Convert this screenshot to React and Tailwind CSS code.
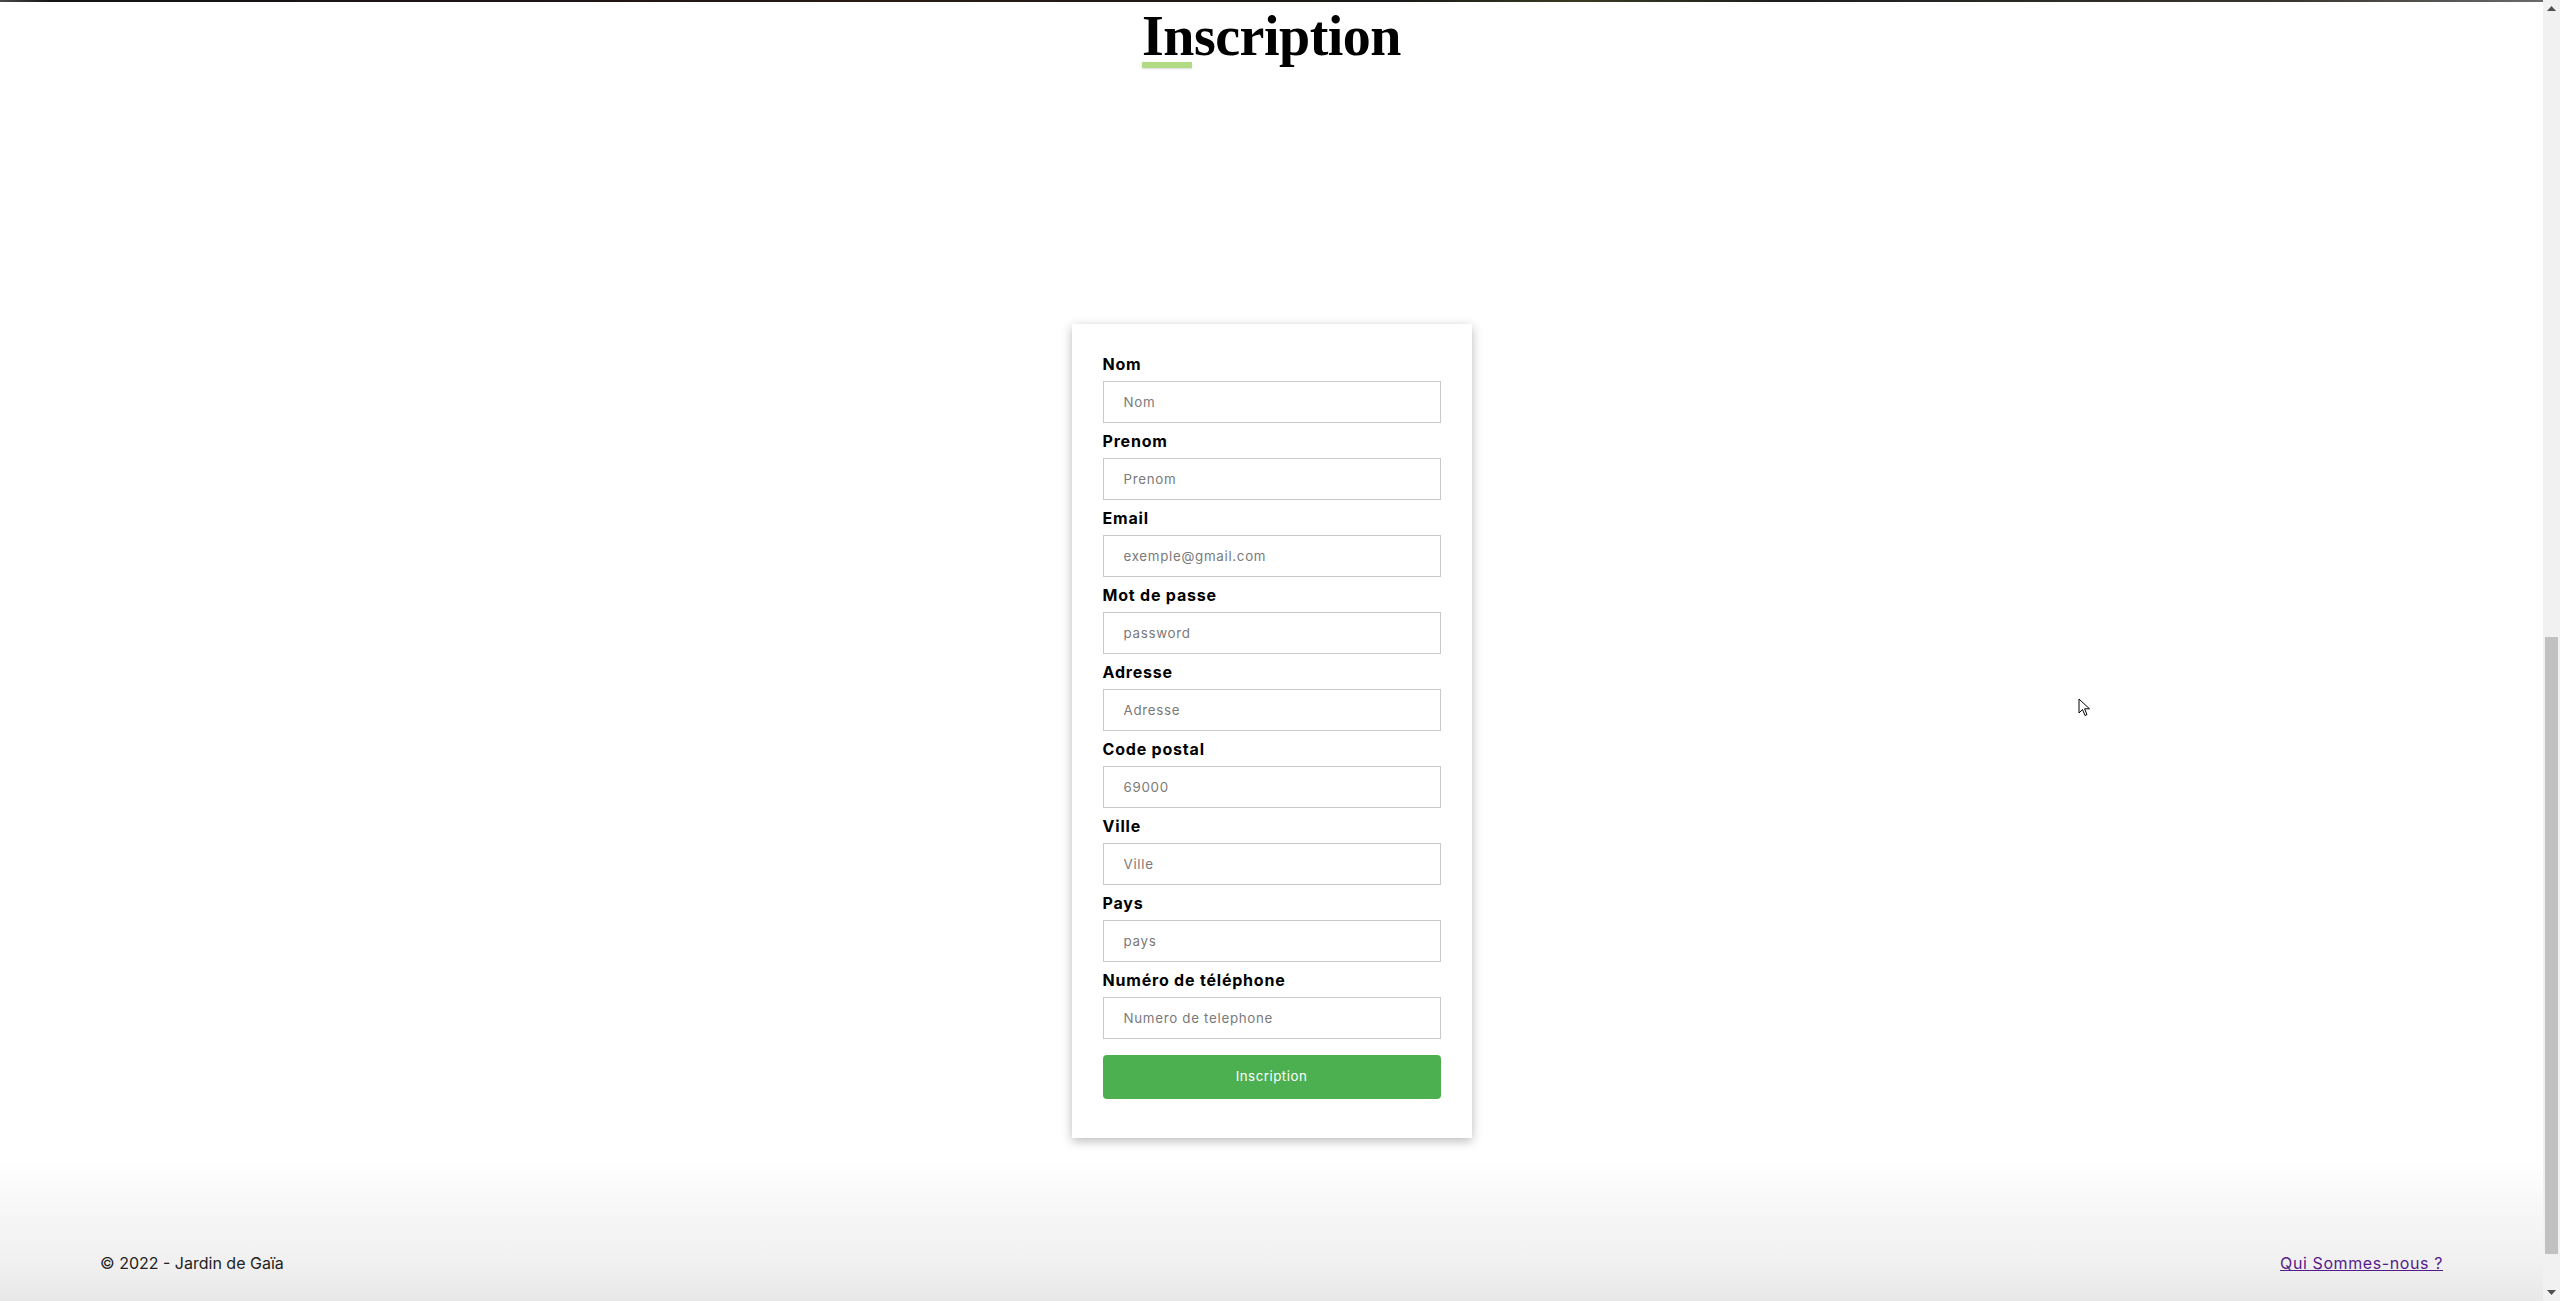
import React from "react";

const fields = [
  { label: "Nom", placeholder: "Nom", type: "text" },
  { label: "Prenom", placeholder: "Prenom", type: "text" },
  { label: "Email", placeholder: "exemple@gmail.com", type: "email" },
  { label: "Mot de passe", placeholder: "password", type: "password" },
  { label: "Adresse", placeholder: "Adresse", type: "text" },
  { label: "Code postal", placeholder: "69000", type: "text" },
  { label: "Ville", placeholder: "Ville", type: "text" },
  { label: "Pays", placeholder: "pays", type: "text" },
  { label: "Numéro de téléphone", placeholder: "Numero de telephone", type: "text" },
];

export default function App() {
  return (
    <div className="relative flex h-[1301px] w-full overflow-hidden bg-white font-['Inter','Noto_Sans',sans-serif]">
      <div className="flex min-w-0 flex-1 flex-col">
        <div className="h-[2px] w-full bg-[linear-gradient(90deg,#4a4a4a_0%,#141414_2%,#1d1416_20%,#2a1a14_35%,#1a1a18_55%,#3a3a22_62%,#1e1e1e_70%,#2c2a26_80%,#3a3530_90%,#6a6a6a_100%)]" />
        <div className="flex flex-col items-center">
          <div className="mt-[6px] inline-flex flex-col items-start">
            <h1 className="text-[56px] font-black leading-[56px] text-black font-['Liberation_Serif',serif] tracking-[-0.5px]">
              Inscription
            </h1>
            <div className="mt-[-2px] h-[6px] w-[50px] bg-[#b1db83] shadow-[0_1px_2px_rgba(0,0,0,0.15)]" />
          </div>
          <form className="mt-[256px] flex w-[400px] flex-col bg-white px-[31px] pb-[39px] pt-[30px] shadow-[0_3px_10px_rgba(0,0,0,0.28)]">
            {fields.map((f) => (
              <div key={f.label} className="mb-[8px] flex flex-col">
                <label className="mb-[7px] h-[20px] text-[16px] font-bold leading-[20px] tracking-[0.8px] text-black">
                  {f.label}
                </label>
                <input
                  type={f.type}
                  placeholder={f.placeholder}
                  className="h-[42px] w-full border border-[#c9c9c9] bg-white px-[20px] text-[13.33px] tracking-[0.7px] text-black placeholder:text-[#7a7a7a] outline-none"
                />
              </div>
            ))}
            <button
              type="button"
              className="mt-[8px] h-[44px] w-full rounded-[4px] bg-[#4caf50] text-[13.33px] tracking-[0.5px] text-white"
            >
              Inscription
            </button>
          </form>
        </div>
        <div className="flex-1" />
        <footer className="flex h-[142px] items-start justify-between bg-[linear-gradient(180deg,#ffffff_0%,#f6f6f6_40%,#f0f0f0_75%,#e8e8e8_100%)] px-[100px] pt-[92px] text-[16px] leading-[24px]">
          <span className="text-[#222222]">© 2022 - Jardin de Gaïa</span>
          <a href="#" className="text-[#551a8b] underline tracking-[0.6px]">
            Qui Sommes-nous ?
          </a>
        </footer>
      </div>
      <div className="flex w-[17px] flex-col bg-[#f1f1f1]">
        <div className="flex h-[17px] items-center justify-center">
          <svg width="9" height="5" viewBox="0 0 9 5"><path d="M4.5 0 L9 5 L0 5 Z" fill="#505050" /></svg>
        </div>
        <div className="h-[620px]" />
        <div className="mx-[2px] h-[617px] bg-[#c1c1c1]" />
        <div className="flex-1" />
        <div className="flex h-[17px] items-center justify-center">
          <svg width="9" height="5" viewBox="0 0 9 5"><path d="M0 0 L9 0 L4.5 5 Z" fill="#505050" /></svg>
        </div>
      </div>
      <svg className="absolute left-[2078px] top-[698px]" width="13" height="20" viewBox="0 0 13 20">
        <path d="M1 1 L1 15 L4.5 11.5 L7 17.5 L9 16.6 L6.6 10.8 L11.5 10.8 Z" fill="#ffffff" stroke="#000000" strokeWidth="1" strokeLinejoin="round" />
      </svg>
    </div>
  );
}
